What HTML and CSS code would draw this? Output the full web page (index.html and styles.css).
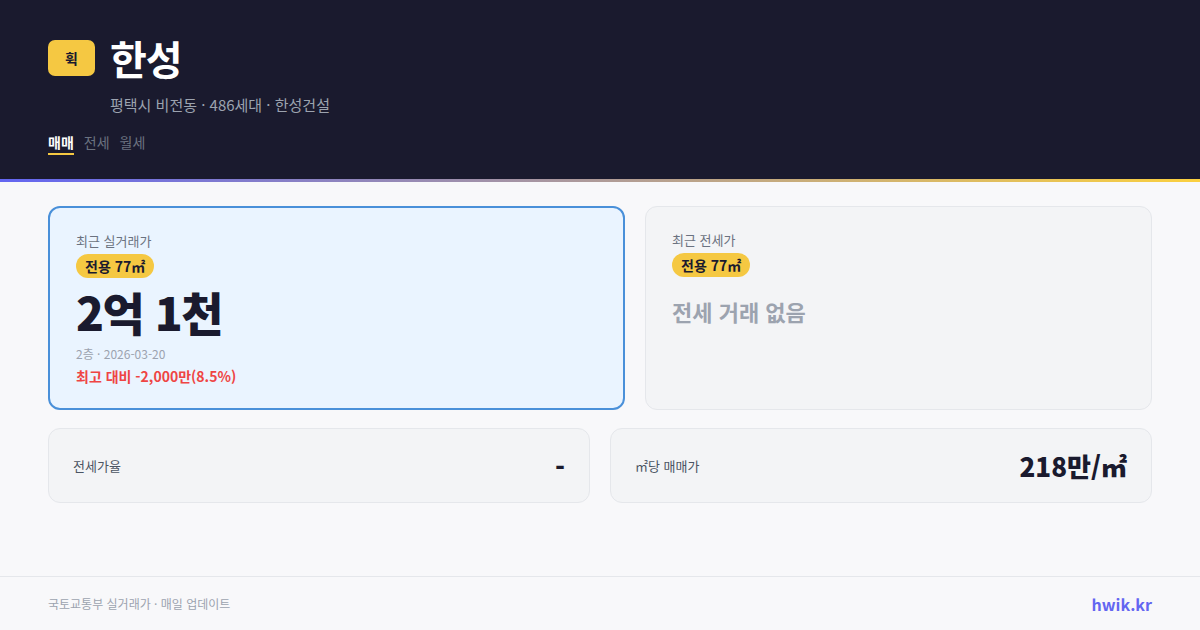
FILE: index.html
```html
<!DOCTYPE html>
<html lang="ko">
<head>
<meta charset="utf-8">
<link rel="stylesheet" href="styles.css">
</head>
<body>
<div class="page">
  <header class="hero">
    <div class="title-row">
      <div class="logo">휙</div>
      <h1 class="title">한성</h1>
    </div>
    <div class="sub">평택시 비전동 · 486세대 · 한성건설</div>
    <nav class="tabs">
      <span class="tab active">매매</span>
      <span class="tab">전세</span>
      <span class="tab">월세</span>
    </nav>
  </header>
  <div class="accent"></div>
  <main class="main">
    <div class="top-grid">
      <section class="card card-primary">
        <div class="card-label">최근 실거래가</div>
        <span class="pill">전용 77㎡</span>
        <div class="price">2억 1천</div>
        <div class="meta">2층 · 2026-03-20</div>
        <div class="diff">최고 대비 -2,000만(8.5%)</div>
      </section>
      <section class="card card-muted">
        <div class="card-label">최근 전세가</div>
        <span class="pill">전용 77㎡</span>
        <div class="empty">전세 거래 없음</div>
      </section>
    </div>
    <div class="bottom-grid">
      <div class="stat">
        <span class="stat-label">전세가율</span>
        <span class="stat-value">-</span>
      </div>
      <div class="stat">
        <span class="stat-label">㎡당 매매가</span>
        <span class="stat-value">218만/㎡</span>
      </div>
    </div>
  </main>
  <footer class="footer">
    <span class="src">국토교통부 실거래가 · 매일 업데이트</span>
    <span class="brand">hwik.kr</span>
  </footer>
</div>
</body>
</html>
```

FILE: styles.css
```css
* { box-sizing: border-box; margin: 0; padding: 0; }
html, body { width: 1200px; height: 630px; overflow: hidden; }
body {
  font-family: "Noto Sans CJK KR", "Noto Sans", sans-serif;
  background: #f8f8fa;
  color: #1a1a2e;
}
.page { display: flex; flex-direction: column; height: 630px; }
.hero {
  background: #1a1a2e;
  height: 179px;
  padding: 38px 48px 0;
}
.title-row { display: flex; align-items: center; gap: 15px; }
.logo {
  width: 47px; height: 36px;
  background: #f5c842;
  border-radius: 7px;
  display: flex; align-items: center; justify-content: center;
  font-size: 14px; font-weight: 700; color: #1a1a2e;
}
.title {
  font-size: 40px; font-weight: 700; color: #ffffff;
  line-height: 40px;
  letter-spacing: -1px;
}
.sub {
  margin-top: 16px;
  padding-left: 62px;
  font-size: 15px; color: #9ca3af;
  line-height: 22px;
}
.tabs { display: flex; gap: 10px; margin-top: 16px; }
.tab {
  font-size: 14px; color: #6b7280;
  line-height: 20px; padding-bottom: 1px;
  border-bottom: 2px solid transparent;
}
.tab.active { color: #ffffff; font-weight: 700; border-bottom-color: #f5c842; }
.accent {
  height: 3px;
  background: linear-gradient(90deg, #6366f1, #fbd03f);
}
.main { flex: 1; padding: 24px 48px 0; }
.top-grid {
  display: grid;
  grid-template-columns: 577fr 507fr;
  gap: 20px;
}
.card {
  height: 204px;
  border-radius: 12px;
}
.card-primary { background: #eaf4ff; border: 2px solid #4a90d9; padding: 23px 26px; }
.card-muted { background: #f3f4f6; border: 1px solid #e5e7eb; padding: 23px 26px; }
.card-label { font-size: 13px; color: #6b7280; line-height: 20px; }
.pill {
  display: inline-block;
  margin-top: 3px;
  background: #f5c842;
  color: #1a1a2e;
  font-size: 14px; font-weight: 700;
  line-height: 24px;
  padding: 0 9px;
  border-radius: 12px;
}
.price {
  font-size: 46px; font-weight: 800; line-height: 60px;
  letter-spacing: -1.5px;
  margin-top: 3px;
}
.meta { font-size: 12px; color: #9ca3af; line-height: 18px; margin-top: 4px; }
.diff { font-size: 14px; color: #ef4444; font-weight: 600; line-height: 22px; margin-top: 2px; }
.empty { font-size: 22px; font-weight: 700; color: #9ca3af; margin-top: 18px; line-height: 32px; }
.bottom-grid {
  display: grid;
  grid-template-columns: 1fr 1fr;
  gap: 20px;
  margin-top: 18px;
}
.stat {
  height: 75px;
  background: #f3f4f6;
  border: 1px solid #e5e7eb;
  border-radius: 12px;
  display: flex; align-items: center; justify-content: space-between;
  padding: 0 24px;
}
.stat-label { font-size: 13px; color: #4b5563; }
.stat-value { font-size: 26px; font-weight: 800; color: #1a1a2e; }
.footer {
  height: 54px;
  border-top: 1px solid #e5e7eb;
  display: flex; align-items: center; justify-content: space-between;
  padding: 0 48px;
}
.src { font-size: 12px; color: #9ca3af; }
.brand { font-size: 16px; font-weight: 700; color: #6366f1; }
```
